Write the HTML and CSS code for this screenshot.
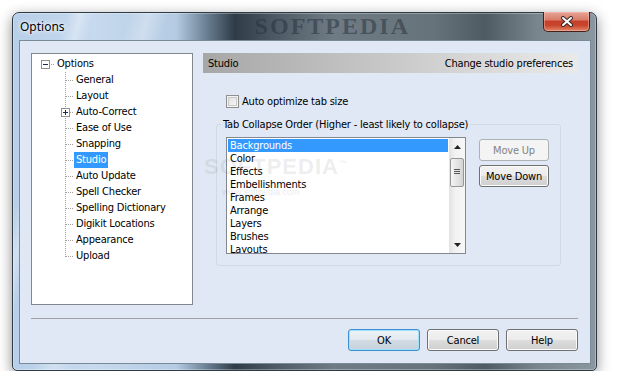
FILE: index.html
```html
<!DOCTYPE html>
<html lang="en">
<head>
  <meta charset="UTF-8">
  <title>Options</title>
  <link rel="stylesheet" href="styles.css">
</head>
<body>
  <div class="window">
    <div class="titlebar">
      <span class="title">Options</span>
      <span class="title-mark">SOFTPEDIA</span>
      <button class="close" title="Close">
        <svg width="14" height="11" viewBox="0 0 14 11">
          <path d="M3 2 L11 9 M11 2 L3 9" stroke="#3b2a27" stroke-width="4" stroke-linecap="round"/>
          <path d="M3 2 L11 9 M11 2 L3 9" stroke="#fff" stroke-width="2" stroke-linecap="round"/>
        </svg>
      </button>
    </div>

    <div class="client">
      <div class="main">
        <div class="tree">
          <div class="row root">
            <span class="root-conn"><span class="expander"></span></span>
            <span class="label">Options</span>
          </div>
          <ul class="children">
            <li class="row"><span class="conn"></span><span class="label">General</span></li>
            <li class="row"><span class="conn"></span><span class="label">Layout</span></li>
            <li class="row"><span class="conn"><span class="expander plus"></span></span><span class="label">Auto-Correct</span></li>
            <li class="row"><span class="conn"></span><span class="label">Ease of Use</span></li>
            <li class="row"><span class="conn"></span><span class="label">Snapping</span></li>
            <li class="row"><span class="conn"></span><span class="label selected">Studio</span></li>
            <li class="row"><span class="conn"></span><span class="label">Auto Update</span></li>
            <li class="row"><span class="conn"></span><span class="label">Spell Checker</span></li>
            <li class="row"><span class="conn"></span><span class="label">Spelling Dictionary</span></li>
            <li class="row"><span class="conn"></span><span class="label">Digikit Locations</span></li>
            <li class="row"><span class="conn"></span><span class="label">Appearance</span></li>
            <li class="row last"><span class="conn"></span><span class="label">Upload</span></li>
          </ul>
        </div>

        <div class="pane">
          <div class="pane-header">
            <span>Studio</span>
            <span>Change studio preferences</span>
          </div>

          <label class="check"><span class="checkbox"></span>Auto optimize tab size</label>

          <fieldset class="group">
            <legend>Tab Collapse Order (Higher - least likely to collapse)</legend>
            <div class="group-body">
              <div class="listbox">
                <ul class="items">
                  <li class="selected">Backgrounds</li>
                  <li>Color</li>
                  <li>Effects</li>
                  <li>Embellishments</li>
                  <li>Frames</li>
                  <li>Arrange</li>
                  <li>Layers</li>
                  <li>Brushes</li>
                  <li>Layouts</li>
                </ul>
                <div class="scrollbar">
                  <span class="arrow">
                    <svg width="7" height="4" viewBox="0 0 7 4"><path d="M0 4 L3.5 0 L7 4 Z" fill="#222"/></svg>
                  </span>
                  <span class="thumb"></span>
                  <span class="track"></span>
                  <span class="arrow">
                    <svg width="7" height="4" viewBox="0 0 7 4"><path d="M0 0 L3.5 4 L7 0 Z" fill="#222"/></svg>
                  </span>
                </div>
              </div>
              <div class="side-buttons">
                <button class="btn" disabled>Move Up</button>
                <button class="btn">Move Down</button>
              </div>
            </div>
          </fieldset>
        </div>
      </div>

      <div class="separator"></div>

      <div class="buttons">
        <button class="btn default">OK</button>
        <button class="btn">Cancel</button>
        <button class="btn">Help</button>
      </div>
    </div>
  </div>

  <div class="watermark">SOFTPEDIA<sup>™</sup></div>
  <div class="watermark-url">www.softpedia.com</div>
</body>
</html>
```

FILE: styles.css
```css
* {
  box-sizing: border-box;
}

body {
  margin: 0;
  background: #fff;
  font-family: "DejaVu Sans Condensed", "Liberation Sans", sans-serif;
  font-size: 11px;
  letter-spacing: -0.2px;
  color: #000;
}

/* window frame */

.window {
  margin: 12px 0 0 12px;
  width: 585px;
  height: 359px;
  border: 1px solid #2e3a44;
  border-radius: 7px 7px 5px 5px;
  padding: 0 5px 6px 6px;
  display: flex;
  flex-direction: column;
  background:
    linear-gradient(105deg, transparent 8%, rgba(255,255,255,.35) 10%, transparent 12%, transparent 17%, rgba(255,255,255,.3) 20%, transparent 23%),
    linear-gradient(to right, #b7cfe9 0%, #c6d9ee 14%, #b4cbe3 28%, #6d8296 33%, #2f3c48 38%, #4d5a65 45%, #6f7b84 55%, #67737b 72%, #4f5b63 81%, #7a868e 90%, #8b979e 100%);
  box-shadow: 0 4px 14px rgba(0,0,0,.45), inset 0 0 0 1px rgba(255,255,255,.3);
}

.titlebar {
  height: 27px;
  display: flex;
  align-items: center;
  padding-left: 1px;
}

.title {
  font-family: "Noto Sans", "Open Sans", sans-serif;
  font-size: 12px;
  letter-spacing: 0;
  text-shadow: 0 0 6px #fff, 0 0 3px #fff;
}

.title-mark {
  margin-left: 190px;
  font-family: "Liberation Serif", serif;
  font-weight: bold;
  font-size: 24px;
  letter-spacing: 2px;
  color: rgba(36, 46, 56, .5);
}

.close {
  margin-left: auto;
  margin-right: 1px;
  margin-top: -1px;
  align-self: flex-start;
  width: 47px;
  height: 20px;
  padding: 0;
  border: 1px solid #43211b;
  border-top: none;
  border-radius: 0 0 5px 5px;
  background: linear-gradient(#e6a596 0%, #d97e6b 40%, #c4402a 50%, #c8452b 70%, #e2876a 100%);
  box-shadow: inset 0 0 0 1px rgba(255, 200, 190, .45);
  display: flex;
  align-items: center;
  justify-content: center;
}

.client {
  flex: 1;
  border: 1px solid #7b8a98;
  background: #dfe8f4;
  padding: 12px 12px 0 11px;
  display: flex;
  flex-direction: column;
}

.main {
  display: flex;
  gap: 10px;
  height: 252px;
}

/* tree view */

.tree {
  width: 162px;
  flex: none;
  border: 1px solid #828790;
  background: #fff;
  padding-top: 2px;
}

.row {
  display: flex;
  align-items: center;
  height: 16px;
}

.root {
  padding-left: 9px;
}

.root-conn {
  width: 14px;
  height: 16px;
  display: flex;
  align-items: center;
  background: repeating-linear-gradient(to right, #a0a0a0 0 1px, transparent 1px 2px) 10px 8px / 4px 1px no-repeat;
}

.children {
  list-style: none;
  margin: 0;
  padding: 0 0 0 29px;
}

.conn {
  width: 13px;
  height: 16px;
  flex: none;
  display: flex;
  align-items: center;
  background:
    repeating-linear-gradient(to bottom, #a0a0a0 0 1px, transparent 1px 2px) 4px 0 / 1px 100% no-repeat,
    repeating-linear-gradient(to right, #a0a0a0 0 1px, transparent 1px 2px) 5px 8px / 8px 1px no-repeat;
}

.last .conn {
  background:
    repeating-linear-gradient(to bottom, #a0a0a0 0 1px, transparent 1px 2px) 4px 0 / 1px 9px no-repeat,
    repeating-linear-gradient(to right, #a0a0a0 0 1px, transparent 1px 2px) 5px 8px / 8px 1px no-repeat;
}

.expander {
  width: 9px;
  height: 9px;
  border: 1px solid #919191;
  background: linear-gradient(#1c2a4a, #1c2a4a) center / 5px 1px no-repeat, #fff;
}

.expander.plus {
  background:
    linear-gradient(#1c2a4a, #1c2a4a) center / 5px 1px no-repeat,
    linear-gradient(#1c2a4a, #1c2a4a) center / 1px 5px no-repeat,
    #fff;
}

.label {
  padding: 0 2px;
  line-height: 16px;
  white-space: nowrap;
}

.label.selected {
  background: #3399ff;
  color: #fff;
}

/* right pane */

.pane {
  flex: 1;
  display: flex;
  flex-direction: column;
}

.pane-header {
  height: 20px;
  padding: 0 5px;
  display: flex;
  align-items: center;
  justify-content: space-between;
  background: linear-gradient(to right, #a7a7a7, #eaeaea);
}

.check {
  margin: 22px 0 0 23px;
  display: flex;
  align-items: center;
  gap: 3px;
  height: 13px;
}

.checkbox {
  width: 13px;
  height: 13px;
  border: 1px solid #8e8f8f;
  background: linear-gradient(135deg, #dcdcdc, #fbfbfb);
  box-shadow: inset 0 0 0 1px #f4f4f4, inset 0 0 0 2px #c9c9c9;
}

.group {
  margin: 10px 0 0 13px;
  width: 345px;
  border: 1px solid #d0dae2;
  border-radius: 3px;
  padding: 6px 11px 11px 9px;
  min-width: 0;
}

.group legend {
  margin-left: -5px;
  padding: 0 2px;
  line-height: 13px;
}

.group-body {
  display: flex;
  align-items: flex-start;
}

.listbox {
  width: 240px;
  height: 117px;
  border: 1px solid #828790;
  background: #fff;
  display: flex;
}

.items {
  flex: 1;
  list-style: none;
  margin: 0;
  padding: 1px;
  overflow: hidden;
}

.items li {
  line-height: 13px;
  height: 13px;
  padding-left: 2px;
  white-space: nowrap;
}

.items li.selected {
  background: #3399ff;
  color: #fff;
}

.scrollbar {
  width: 16px;
  display: flex;
  flex-direction: column;
  background: linear-gradient(to right, #e2e2e2, #f2f2f2 40%, #f7f7f7);
}

.arrow {
  height: 17px;
  display: flex;
  align-items: center;
  justify-content: center;
}

.thumb {
  margin: 3px 1px 0 1px;
  height: 29px;
  border: 1px solid #979797;
  border-radius: 2px;
  background:
    linear-gradient(#555, #555) center 10px / 6px 1px no-repeat,
    linear-gradient(#555, #555) center 12px / 6px 1px no-repeat,
    linear-gradient(#555, #555) center 14px / 6px 1px no-repeat,
    linear-gradient(to right, #f5f5f5, #e4e4e4 50%, #d4d4d4);
}

.track {
  flex: 1;
}

.side-buttons {
  margin: 2px 0 0 13px;
  display: flex;
  flex-direction: column;
  gap: 4px;
}

/* buttons */

.btn {
  width: 70px;
  height: 22px;
  padding: 0;
  font: inherit;
  letter-spacing: inherit;
  color: #000;
  border: 1px solid #707070;
  border-radius: 3px;
  background: linear-gradient(#f2f2f2 0%, #ebebeb 50%, #dddddd 50%, #cfcfcf 100%);
  box-shadow: inset 0 0 0 1px #fbfbfb;
}

.btn:disabled {
  border-color: #adb2b5;
  background: #f4f4f4;
  color: #838383;
  box-shadow: none;
}

.btn.default {
  border-color: #3c8fd0;
  background: linear-gradient(#edf2f6 0%, #e3e9ef 50%, #d3dce4 50%, #c6d1db 100%);
  box-shadow: inset 0 0 0 1px #9fe0fb;
}

.separator {
  margin-top: 13px;
  border-top: 1px solid #a0a0a0;
}

.buttons {
  margin-top: 10px;
  display: flex;
  justify-content: flex-end;
  gap: 7px;
}

.buttons .btn {
  width: 72px;
}

/* site watermark over the dialog */

.watermark {
  position: absolute;
  left: 204px;
  top: 154px;
  font-family: "Liberation Sans", sans-serif;
  font-weight: bold;
  font-size: 22px;
  letter-spacing: 1px;
  color: rgba(120, 120, 120, .14);
}

.watermark sup {
  font-size: 8px;
}

.watermark-url {
  position: absolute;
  left: 222px;
  top: 187px;
  font-family: "Liberation Sans", sans-serif;
  font-size: 9px;
  letter-spacing: 0;
  color: rgba(120, 120, 120, .18);
}
```
